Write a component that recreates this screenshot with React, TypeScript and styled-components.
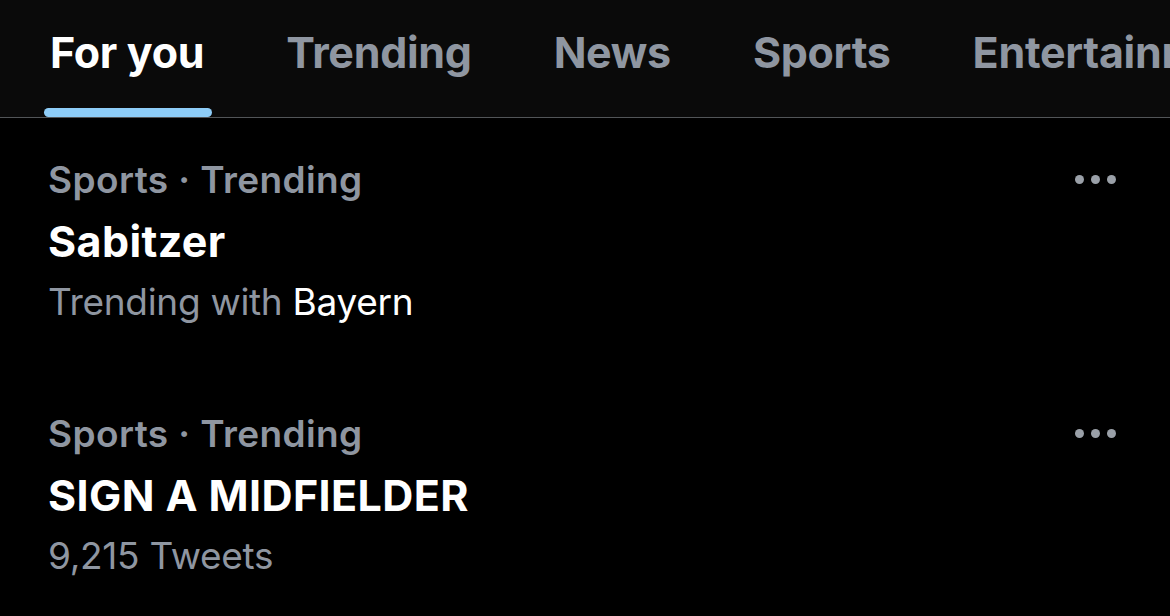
import * as React from 'react';
import styled, { createGlobalStyle } from 'styled-components';

const GlobalStyle = createGlobalStyle`
  html, body {
    margin: 0;
    padding: 0;
    background: #000;
  }
  body {
    font-family: Inter, "Noto Sans", "Liberation Sans", sans-serif;
    -webkit-font-smoothing: antialiased;
  }
`;

const Screen = styled.div`
  width: 1170px;
  height: 616px;
  overflow: hidden;
  background: #000;
`;

const TabBar = styled.nav`
  display: flex;
  gap: 70px;
  height: 117px;
  padding-left: 44px;
  background: #0a0a0a;
  border-bottom: 1px solid #525558;
  white-space: nowrap;
`;

const Tab = styled.div<{ $active?: boolean }>`
  position: relative;
  display: flex;
  align-items: flex-start;
  padding: 26px 6px 0;
  font-size: 43px;
  font-weight: 700;
  letter-spacing: -0.3px;
  color: ${(p) => (p.$active ? '#ffffff' : '#8f96a1')};

  &::after {
    content: '';
    display: ${(p) => (p.$active ? 'block' : 'none')};
    position: absolute;
    left: 0;
    right: -2px;
    bottom: 0;
    height: 9px;
    border-radius: 5px;
    background: #8ecdf8;
  }
`;

const List = styled.div`
  display: flex;
  flex-direction: column;
  gap: 74px;
  padding: 33px 0 0 48px;
`;

const Trend = styled.div`
  display: flex;
  justify-content: space-between;
  padding-right: 54px;
`;

const Lines = styled.div`
  display: flex;
  flex-direction: column;
  gap: 3px;
`;

const Context = styled.div`
  font-size: 37px;
  font-weight: 600;
  line-height: 58px;
  letter-spacing: 0.4px;
  color: #8f96a1;
`;

const Title = styled.div`
  font-size: 43px;
  font-weight: 700;
  line-height: 58px;
  letter-spacing: 0.4px;
  color: #ffffff;
`;

const Meta = styled.div`
  font-size: 37px;
  font-weight: 400;
  line-height: 58px;
  letter-spacing: -0.3px;
  color: #8f96a1;

  strong {
    font-weight: 400;
    color: #ffffff;
  }
`;

const More = styled.button`
  display: flex;
  gap: 7px;
  height: 9px;
  margin-top: 24px;
  padding: 0;
  border: 0;
  background: none;

  span {
    width: 9px;
    height: 9px;
    border-radius: 50%;
    background: #9aa0a8;
  }
`;

const tabs = ['For you', 'Trending', 'News', 'Sports', 'Entertainment'];

const trends = [
  { context: 'Sports · Trending', title: 'Sabitzer', meta: <>Trending with <strong>Bayern</strong></> },
  { context: 'Sports · Trending', title: 'SIGN A MIDFIELDER', meta: <>9,215 Tweets</> },
];

export default function App() {
  return (
    <Screen>
      <GlobalStyle />
      <TabBar>
        {tabs.map((t, i) => (
          <Tab key={t} $active={i === 0}>
            {t}
          </Tab>
        ))}
      </TabBar>
      <List>
        {trends.map((t) => (
          <Trend key={t.title}>
            <Lines>
              <Context>{t.context}</Context>
              <Title>{t.title}</Title>
              <Meta>{t.meta}</Meta>
            </Lines>
            <More aria-label="More">
              <span />
              <span />
              <span />
            </More>
          </Trend>
        ))}
      </List>
    </Screen>
  );
}
